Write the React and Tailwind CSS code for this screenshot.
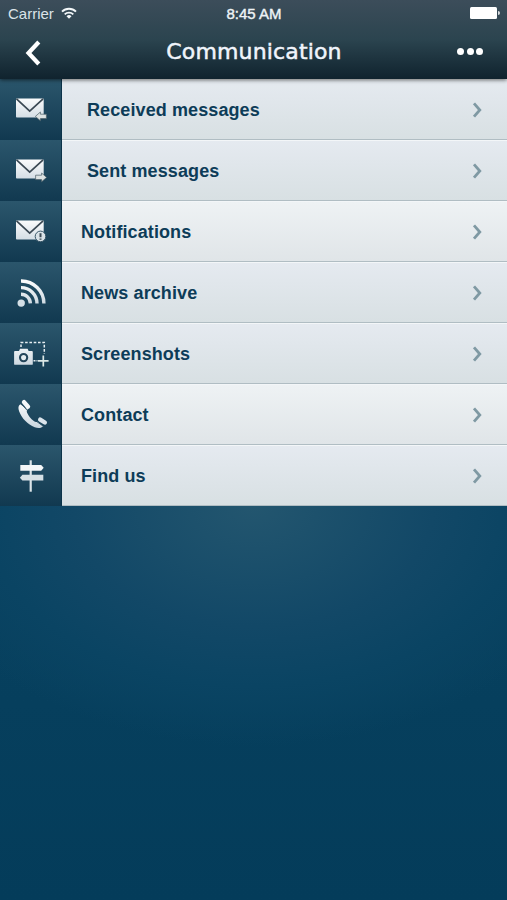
import React from 'react';

function Cell({ children }) {
  return (
    <svg viewBox="0 0 62 61" className="block h-[61px] w-[62px]" fill="none">
      <defs>
        <linearGradient id="metal" gradientUnits="userSpaceOnUse" x1="0" y1="17" x2="0" y2="44">
          <stop offset="0" stopColor="#ffffff" />
          <stop offset="1" stopColor="#c9d5de" />
        </linearGradient>
      </defs>
      {children}
    </svg>
  );
}

function Envelope() {
  return (
    <>
      <rect x="16" y="19.5" width="27.7" height="19" rx="0.8" fill="url(#metal)" />
      <path d="M16.5 19.8l13.2 12.4 13.4-12.4" stroke="#3a4853" strokeWidth="1.7" />
    </>
  );
}

function ReceivedIcon() {
  return (
    <Cell>
      <Envelope />
      <path d="M35.4 37.4l5-4.4v2.2h6v4.4h-6v2.2z" fill="#dce2e2" stroke="#4a5d66" strokeWidth="0.7" />
    </Cell>
  );
}

function SentIcon() {
  return (
    <Cell>
      <Envelope />
      <path d="M46.6 37.4l-5-4.4v2.2h-6v4.4h6v2.2z" fill="#dce2e2" stroke="#4a5d66" strokeWidth="0.7" />
    </Cell>
  );
}

function NotificationIcon() {
  return (
    <Cell>
      <Envelope />
      <circle cx="40.5" cy="35.4" r="5.3" fill="#d9e2e7" stroke="#294a5c" strokeWidth="0.9" />
      <path d="M40.5 32.2v4M40.5 37.4v1.4" stroke="#3a4853" strokeWidth="2" />
    </Cell>
  );
}

function NewsIcon() {
  return (
    <Cell>
      <g stroke="url(#metal)" strokeWidth="3.4">
        <path d="M21 19a22.6 22.6 0 0 1 22.6 26.4" strokeDasharray="35.5 99" />
        <path d="M21 25.6a16 16 0 0 1 16 15.8" />
        <path d="M21 32.2a9.4 9.4 0 0 1 9.4 9.2" />
      </g>
      <circle cx="21.2" cy="41.1" r="3.7" fill="#d4dfe6" />
    </Cell>
  );
}

function ScreenshotIcon() {
  return (
    <Cell>
      <path d="M21 24v-4.500h23.300V31" stroke="#e6edf1" strokeWidth="1.500" strokeDasharray="2.600 1.700" />
      <path d="M33.500 37.800h4" stroke="#e6edf1" strokeWidth="1.500" strokeDasharray="2 1" />
      <path d="M38 37.800h10.600M43.300 32.400v11" stroke="#dbe8e6" strokeWidth="1.700" />
      <path
        d="M15 28h4l1-2.200h7.600l1 2.200h3.300q.9 0 .9.9v12q0 .9-.9.9H15q-.9 0-.9-.9v-12q0-.9.9-.9z"
        fill="url(#metal)"
      />
      <circle cx="23.600" cy="34.600" r="3.600" fill="#e6edf0" stroke="#24455a" strokeWidth="2.100" />
    </Cell>
  );
}

function ContactIcon() {
  return (
    <Cell>
      <path
        d="M20.300 20.200C18.200 21.500 18 24 19.100 27.300c2.500 7.100 8.600 13.200 15.600 16 3.400 1.300 6.800 1.100 8.300-1l-5.600-4.500c-1.300.5-2.400.2-3.600-.7-3.100-2.300-5.300-5.200-6.700-8.300-.6-1.400-.3-2.500.7-3.200z"
        fill="url(#metal)"
      />
      <path d="M24 18.100l4 4.600" stroke="#f5f8fa" strokeWidth="4.400" strokeLinecap="round" />
      <path d="M40.200 35.600l4.600 2.900" stroke="#dbe4eb" strokeWidth="4.400" strokeLinecap="round" />
      <path d="M20.800 19.400l6.400 7M36.800 37.600l7 5" stroke="#2b5064" strokeWidth="0.900" />
    </Cell>
  );
}

function FindUsIcon() {
  return (
    <Cell>
      <path d="M30.700 15.300v31.400" stroke="#dbe4e8" strokeWidth="2.200" />
      <path d="M20.300 20h20.900l2.500 2.800-2.500 2.900H20.300z" fill="#f4f7f8" />
      <path d="M43.300 29.800H22.400l-2.500 2.900 2.500 2.900h20.900z" fill="#d6e0e5" />
    </Cell>
  );
}

const ITEMS = [
  { label: 'Received messages', icon: ReceivedIcon, nested: true },
  { label: 'Sent messages', icon: SentIcon, nested: true },
  { label: 'Notifications', icon: NotificationIcon, light: true },
  { label: 'News archive', icon: NewsIcon },
  { label: 'Screenshots', icon: ScreenshotIcon },
  { label: 'Contact', icon: ContactIcon, light: true },
  { label: 'Find us', icon: FindUsIcon },
];

function StatusBar() {
  return (
    <div className="grid h-7 grid-cols-3 items-center pl-2 pr-[7px] text-[15px] leading-none">
      <div className="flex items-center gap-[7px] text-[#dbe3e8]">
        <span className="-mt-0.5">Carrier</span>
        <svg viewBox="0 0 16 12" className="h-3 w-4 -translate-y-px" fill="none" stroke="#f3f7f9" strokeWidth="1.9">
          <path d="M1 4.6a10 10 0 0 1 14 0" />
          <path d="M3.7 7.4a6.2 6.2 0 0 1 8.6 0" />
          <path d="M8 11.8L5.5 9.3a3.6 3.6 0 0 1 5 0z" fill="#f3f7f9" stroke="none" />
        </svg>
      </div>
      <span className="-mt-0.5 text-center text-[#eef3f6] [-webkit-text-stroke:0.4px_#eef3f6]">8:45 AM</span>
      <div className="-mt-0.5 flex items-center justify-end gap-px">
        <div className="h-3 w-[27px] rounded-[1.5px] bg-white" />
        <div className="h-1 w-[2px] rounded-r-full bg-white/80" />
      </div>
    </div>
  );
}

function Header() {
  return (
    <header className="relative z-10 h-[79px] bg-linear-to-b from-[#3c4d5a] via-[#2b444f] to-[#10232e] shadow-[0_1px_4px_rgba(0,0,0,0.6)]">
      <StatusBar />
      <div className="grid h-[49px] grid-cols-[1fr_auto_1fr] items-center pl-[25px] pr-6">
        <svg viewBox="0 0 16 26" className="h-[26px] w-4" fill="none" stroke="#fff" strokeWidth="4.2">
          <path d="M13.8 2L3.5 13l10.3 11" />
        </svg>
        <h1 className="pb-0.5 font-['DejaVu_Sans',sans-serif] text-[22px] leading-none tracking-[0.15px] text-[#f0f4fb] [-webkit-text-stroke:0.5px_#f0f4fb]">
          Communication
        </h1>
        <div className="flex justify-end gap-[2.3px] pb-[2px]">
          <span className="size-[7px] rounded-full bg-white" />
          <span className="size-[7px] rounded-full bg-white" />
          <span className="size-[7px] rounded-full bg-white" />
        </div>
      </div>
    </header>
  );
}

function MenuRow({ item }) {
  const Icon = item.icon;
  return (
    <li className="flex h-[61px]">
      <div className="w-[62px] shrink-0 border-r border-[#0c3349] bg-linear-to-b from-[#2b566c] to-[#113950]">
        <Icon />
      </div>
      <div
        className={`flex flex-1 items-center justify-between border-b border-t border-b-[#b0bdc3] border-t-[#f3f6f8] pr-[25px] pt-px ${
          item.nested ? 'pl-[25px]' : 'pl-[19px]'
        } ${item.light ? 'bg-linear-to-b from-[#eef2f4] to-[#e0e5e8]' : 'bg-linear-to-b from-[#e5eaf0] to-[#d8e0e3]'}`}
      >
        <span className="text-[18px] font-bold leading-none tracking-[0.1px] text-[#0d3c58]">{item.label}</span>
        <svg viewBox="0 0 10 16" className="h-4 w-[10px]" fill="none" stroke="#7f99a3" strokeWidth="2.8">
          <path d="M2 1.3L7.8 8 2 14.7" />
        </svg>
      </div>
    </li>
  );
}

export default function App() {
  return (
    <div className="flex h-[900px] w-[507px] flex-col overflow-hidden bg-[#043c5a] font-['Liberation_Sans',sans-serif]">
      <Header />
      <ul>
        {ITEMS.map((item) => (
          <MenuRow key={item.label} item={item} />
        ))}
      </ul>
      <div className="flex-1 bg-[radial-gradient(ellipse_360px_240px_at_50%_0%,#23566f_0%,#124867_50%,#0a4463_75%,transparent_100%),linear-gradient(to_bottom,#084260,#043c5a)]" />
    </div>
  );
}
